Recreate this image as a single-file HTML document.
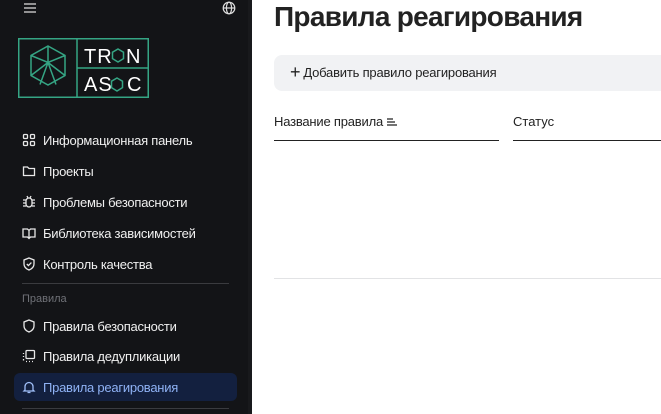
<!DOCTYPE html>
<html><head><meta charset="utf-8"><style>
*{margin:0;padding:0;box-sizing:border-box}
body{width:661px;height:414px;overflow:hidden;font-family:"Liberation Sans",sans-serif;background:#fff;position:relative}
#sb{position:absolute;left:0;top:0;width:252px;height:414px;background:#131417}
#sb .edge{position:absolute;right:0;top:0;width:4px;height:414px;background:#18191c}
.it{position:absolute;left:22px;height:20px;display:flex;align-items:center;color:#f0f0f0;font-size:13px;letter-spacing:-0.25px}
.it svg{width:14px;height:14px;margin-right:7px;fill:none;stroke:#e8e8e8;stroke-width:1.3}
.div{position:absolute;left:22px;width:207px;height:1px;background:#3a3b3f}
#main{position:absolute;left:252px;top:0;right:0;height:414px}
</style></head><body>
<div id="sb"><div class="edge"></div>
<svg style="position:absolute;left:23px;top:2px" width="14" height="12" viewBox="0 0 14 12"><path d="M1 2h12M1 6h12M1 10h12" stroke="#ddd" stroke-width="1.3"/></svg>
<svg style="position:absolute;left:222px;top:1px" width="14" height="14" viewBox="0 0 14 14" fill="none" stroke="#ddd" stroke-width="1.2"><circle cx="7" cy="7" r="5.8"/><ellipse cx="7" cy="7" rx="2.6" ry="5.8"/><path d="M1.2 7h11.6"/></svg>
<svg style="position:absolute;left:18px;top:38px" width="131" height="60" viewBox="0 0 131 60" fill="none" stroke="#35a584" stroke-width="1.5">
<rect x="0.75" y="0.75" width="129.5" height="58.5"/><path d="M59 0.75V59.25M59 30h71.25"/>
<path d="M30 8l17 9.5v20L30 47 13 37.5v-20z M13 17.5l17 7 17-7 M30 8v16.5 M13 37.5l17-13 17 13 M30 24.5l-8 22 M30 24.5l8 22"/>
<text x="66" y="25" font-family="Liberation Sans" font-size="20" fill="#fff" stroke="none" letter-spacing="1">TR</text>
<path d="M100 11l5.5 3.2v6.4L100 24l-5.5-3.4v-6.4z"/>
<text x="108" y="25" font-family="Liberation Sans" font-size="20" fill="#fff" stroke="none">N</text>
<text x="66" y="53" font-family="Liberation Sans" font-size="20" fill="#fff" stroke="none" letter-spacing="1">AS</text>
<path d="M99 40l5.5 3.2v6.4L99 53l-5.5-3.4v-6.4z"/>
<text x="109" y="53" font-family="Liberation Sans" font-size="20" fill="#fff" stroke="none">C</text>
</svg>
<div class="it" style="top:130px"><svg viewBox="0 0 14 14"><rect x="1.5" y="1.5" width="4" height="4" rx="1"/><rect x="8.5" y="1.5" width="4" height="4" rx="1"/><rect x="1.5" y="8.5" width="4" height="4" rx="1"/><rect x="8.5" y="8.5" width="4" height="4" rx="1"/></svg>Информационная панель</div>
<div class="it" style="top:161px"><svg viewBox="0 0 14 14"><path d="M1.5 3h4l1.5 1.5h5.5v7h-11z"/></svg>Проекты</div>
<div class="it" style="top:192px"><svg viewBox="0 0 14 14"><rect x="4" y="3" width="6" height="9" rx="3"/><path d="M1 5h3M10 5h3M1 8h3M10 8h3M1 11h3M10 11h3M5 1l1 2M9 1l-1 2"/></svg>Проблемы безопасности</div>
<div class="it" style="top:223px"><svg viewBox="0 0 14 14"><path d="M1 3h4.5L7 4.5 8.5 3H13v8H8.5L7 12.5 5.5 11H1zM7 4.5v8"/></svg>Библиотека зависимостей</div>
<div class="it" style="top:254px"><svg viewBox="0 0 14 14"><path d="M7 1l5 2v4c0 3-2.5 5-5 6-2.5-1-5-3-5-6V3z M4.8 7l1.6 1.6 3-3"/></svg>Контроль качества</div>
<div class="div" style="top:283px"></div>
<div style="position:absolute;left:22px;top:293px;font-size:11px;color:#6f7177">Правила</div>
<div class="it" style="top:316px"><svg viewBox="0 0 14 14"><path d="M7 1l5 2v4c0 3-2.5 5-5 6-2.5-1-5-3-5-6V3z"/></svg>Правила безопасности</div>
<div class="it" style="top:346px"><svg viewBox="0 0 14 14"><rect x="4" y="1.5" width="8.5" height="8" rx="1"/><path d="M1.5 4v1M1.5 7v1M1.5 10v1.5M4 12.5h1M7 12.5h1M10 12.5h1"/></svg>Правила дедупликации</div>
<div style="position:absolute;left:14px;top:373px;width:223px;height:28px;border-radius:6px;background:#13203f"></div>
<div class="it" style="top:377px;color:#8fb2f5"><svg viewBox="0 0 14 14" style="stroke:#9fbef7"><path d="M3 10V6.5a4 4 0 0 1 8 0V10l1 1H2z M5.5 12.5h3"/></svg>Правила реагирования</div>
<div class="div" style="top:408px"></div>
</div>
<div id="main">
<div style="position:absolute;left:22px;top:1px;font-size:28px;font-weight:bold;color:#222;letter-spacing:-0.7px;line-height:32px">Правила реагирования</div>
<div style="position:absolute;left:22px;top:55px;width:420px;height:36px;border-radius:8px;background:#f1f2f4"></div>
<div style="position:absolute;left:38px;top:64px;font-size:13px;color:#222;display:flex;align-items:center;letter-spacing:-0.2px"><span style="font-size:18px;margin-right:3px;line-height:16px">+</span>Добавить правило реагирования</div>
<div style="position:absolute;left:22px;top:114px;font-size:13px;color:#222;letter-spacing:-0.2px">Название правила <svg width="12" height="10" viewBox="0 0 12 10" style="vertical-align:-1px" stroke="#222" stroke-width="1.2"><path d="M1 2h6M1 5h8M1 8h10"/></svg></div>
<div style="position:absolute;left:261px;top:114px;font-size:13px;color:#222">Статус</div>
<div style="position:absolute;left:22px;top:140px;width:225px;height:1px;background:#222"></div>
<div style="position:absolute;left:261px;top:140px;width:160px;height:1px;background:#222"></div>
<div style="position:absolute;left:22px;top:278px;width:400px;height:1px;background:#e2e3e5"></div>
</div>
</body></html>
